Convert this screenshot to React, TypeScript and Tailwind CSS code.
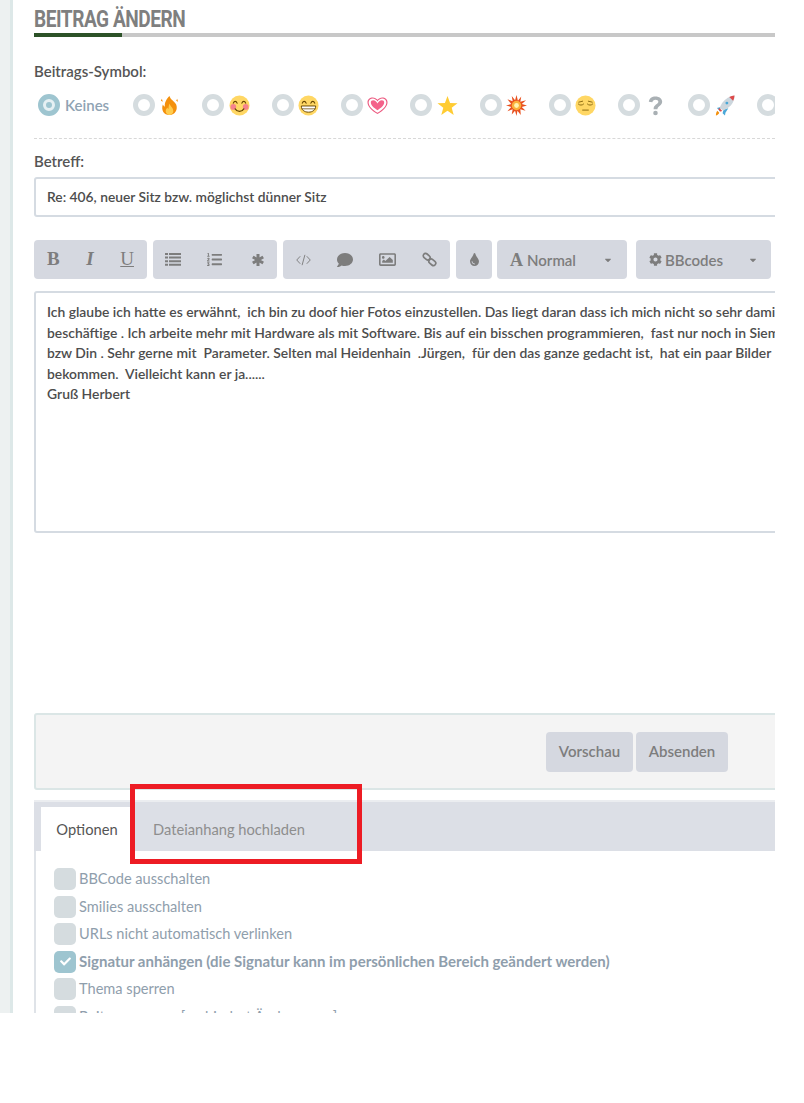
import { FaCaretDown, FaCheck, FaCog, FaComment, FaListOl, FaRegImage, FaTint } from "react-icons/fa";

const font = "font-['Lato','Noto_Sans',sans-serif]";

const postLines = [
  "Ich glaube ich hatte es erwähnt,  ich bin zu doof hier Fotos einzustellen. Das liegt daran dass ich mich nicht so sehr damit",
  "beschäftige . Ich arbeite mehr mit Hardware als mit Software. Bis auf ein bisschen programmieren,  fast nur noch in Siemens",
  "bzw Din . Sehr gerne mit  Parameter. Selten mal Heidenhain  .Jürgen,  für den das ganze gedacht ist,  hat ein paar Bilder",
  "bekommen.  Vielleicht kann er ja......",
  "Gruß Herbert",
];

const options = [
  { label: "BBCode ausschalten" },
  { label: "Smilies ausschalten" },
  { label: "URLs nicht automatisch verlinken" },
  { label: "Signatur anhängen (die Signatur kann im persönlichen Bereich geändert werden)", checked: true },
  { label: "Thema sperren" },
  { label: "Beitrag sperren [verhindert Änderungen]" },
];

const Fire = () => (
  <svg viewBox="0 0 22 22" className="w-[21px] h-[21px] shrink-0">
    <path d="M11 1c1 4 5 5 7 9 2 5-1 11-7 11S2 16 4 10c.6 1 1.200 2 2.200 2.200C5.500 8 8 4 11 1z" fill="#f4900c" />
    <path d="M11 9c.5 3 4 4 4 8 0 2-2 4-4 4s-4-2-4-4c0-2 1-3 2-4 0 1 .5 1.500 1 1.500C10 12 10.500 10.500 11 9z" fill="#ffcc4d" />
    <path d="M3 4l1 3-2-1zM19 4l1 3-2-1z" fill="#f4900c" />
  </svg>
);

const Smile = () => (
  <svg viewBox="0 0 22 22" className="w-[21px] h-[21px] shrink-0">
    <circle cx="11" cy="11" r="10.500" fill="#ffd764" />
    <circle cx="4.500" cy="12.500" r="3" fill="#f6828c" />
    <circle cx="17.500" cy="12.500" r="3" fill="#f6828c" />
    <path d="M4.500 8.500c1-2.500 3-2.500 4 0M13.500 8.500c1-2.500 3-2.500 4 0M6.500 14.500c2 3.500 7 3.500 9 0" fill="none" stroke="#664500" strokeWidth="1.200" strokeLinecap="round" />
  </svg>
);

const Grin = () => (
  <svg viewBox="0 0 22 22" className="w-[21px] h-[21px] shrink-0">
    <circle cx="11" cy="11" r="10.500" fill="#ffd764" />
    <path d="M4.500 8.500c1-2.500 3-2.500 4 0M13.500 8.500c1-2.500 3-2.500 4 0" fill="none" stroke="#664500" strokeWidth="1.200" strokeLinecap="round" />
    <path d="M3.500 11.500h15c0 4-3 6.500-7.500 6.500s-7.500-2.500-7.500-6.500z" fill="#fff" stroke="#664500" strokeWidth="1" />
    <path d="M3.800 14.500h14.400" stroke="#664500" strokeWidth=".8" />
  </svg>
);

const Heart = () => (
  <svg viewBox="0 0 22 22" className="w-[21px] h-[21px] shrink-0">
    <path d="M11 20C5 16 .5 12.500.5 7.500.5 4.500 3 2.500 6 2.500c2 0 4 1 5 2.500 1-1.500 3-2.500 5-2.500 3 0 5.500 2 5.500 5C21.500 12.500 17 16 11 20z" fill="#ec5a80" />
    <path d="M11 18.500C6 15.500 1.700 12 1.700 7.500 1.700 5.300 4 3.700 6 3.700c2 0 4 1.500 5 3 1-1.500 3-3 5-3 2 0 4.300 1.600 4.300 3.800C20.300 12 16 15.500 11 18.500z" fill="#fff" />
    <path d="M11 16c-4-2.500-7-5-7-8.300C4 6.500 5 5.500 6.500 5.500 8.500 5.500 10 7 11 9c1-2 2.500-3.500 4.500-3.500C17 5.500 18 6.500 18 7.700 18 11 15 13.500 11 16z" fill="#f4628a" />
  </svg>
);

const Star = () => (
  <svg viewBox="0 0 22 22" className="w-[21px] h-[21px] shrink-0">
    <path d="M11 1l2.700 7.300 7.800.3-6.100 4.800 2.100 7.600L11 16.600 4.500 21l2.100-7.600L.5 8.600l7.800-.3z" fill="#ffcc33" />
  </svg>
);

const Boom = () => (
  <svg viewBox="0 0 22 22" className="w-[21px] h-[21px] shrink-0">
    <path d="M11 0l1.500 6L16 1.500 15 7l6-1.500-4.500 4L22 11l-5.500 1.500 4 4-5.500-1.500.5 6-3.500-4.500L11 22l-1.500-5.500L6 20.500 7 15l-5.500 2 4-4.500L0 11l5.500-1.500-4-5L7 6.500 6 1l3.500 4.500z" fill="#e8501e" />
    <circle cx="11" cy="11" r="5" fill="#fbb03b" />
    <circle cx="11" cy="11" r="2.500" fill="#fff3b0" />
  </svg>
);

const Pensive = () => (
  <svg viewBox="0 0 22 22" className="w-[21px] h-[21px] shrink-0">
    <circle cx="11" cy="11" r="10.500" fill="#ffd764" />
    <path d="M3.500 9.500c1.500 1.500 4 1.500 5.500 0M13 9.500c1.500 1.500 4 1.500 5.500 0M4 7.500l4-1M18 7.500l-4-1M8 15.800h6" fill="none" stroke="#8a6a10" strokeWidth="1" strokeLinecap="round" />
  </svg>
);

const Question = () => (
  <svg viewBox="0 0 22 22" className="w-[21px] h-[21px] shrink-0">
    <path d="M4 7c.5-3.500 3.200-5.500 7-5.500 4 0 7 2.300 7 5.500 0 4-4.800 4.300-5 8H9c0-5 5-5.200 5-7.800 0-1.300-1.300-2.200-3-2.200-1.800 0-3 1-3.300 2.700z" fill="#a9b0b4" />
    <circle cx="11" cy="18.800" r="2.400" fill="#a9b0b4" />
  </svg>
);

const Rocket = () => (
  <svg viewBox="0 0 22 22" className="w-[21px] h-[21px] shrink-0">
    <path d="M3 13.500l4-1-1 5-1-2zM9 19l1-4 5-1-3 4.500-.5 3z" fill="#4aa8d8" />
    <path d="M21.500.500c-5 .5-9.500 3-13 8l-2.500 4.500 3.500 3.500 4.500-2.500c5-3.500 7.500-8 7.500-13.500z" fill="#ccd6dd" />
    <path d="M21.500.500c-2 .2-3.800.7-5.500 1.500l4 4c.9-1.800 1.400-3.600 1.500-5.500z" fill="#dd4a4a" />
    <circle cx="13.500" cy="8.500" r="1.500" fill="#4aa8d8" />
    <path d="M3.500 16.500l2 2c-.5 1.500-2 2.500-3.500 3 0-2 .5-4 1.500-5z" fill="#f4900c" />
    <path d="M5.500 13.500l3 3-1.500 1-2.500-2.500z" fill="#dd4a4a" />
  </svg>
);

const symbols = [Fire, Smile, Grin, Heart, Star, Boom, Pensive, Question, Rocket];

const Radio = ({ active = false }: { active?: boolean }) => (
  <span className={`flex items-center justify-center w-[22px] h-[22px] shrink-0 rounded-full border-[5px] ${active ? "border-[#9ec5d0] bg-[#e6f0f3]" : "border-[#d5dcdf] bg-white"}`}>
    {active && <span className="w-[6px] h-[6px] rounded-full bg-[#9ec5d0]" />}
  </span>
);

const ToolGroup = ({ className, children }: { className: string; children: React.ReactNode }) => (
  <div className={`flex items-center h-[39px] rounded-[4px] bg-[#d5d8e0] text-[#7d7d7d] ${className}`}>{children}</div>
);

export default function App() {
  return (
    <div className={`min-h-[1103px] bg-white ${font}`}>
      <div className="relative flex w-[775px] h-[1013px] overflow-hidden">
        <div className="w-[13px] shrink-0 bg-[#edf1f1] border-r-[3px] border-[#dde8e8]" />

        <div className="w-[800px] shrink-0 ml-[21px]">
          <div className="h-[33px] pt-[6px] font-['Roboto',sans-serif] font-bold text-[23px] leading-[28px] text-[#7f7f7f] uppercase scale-x-[0.83] origin-left tracking-tight whitespace-nowrap">
            Beitrag ändern
          </div>
          <div className="h-[4px] w-[741px] bg-[#c8c8c8]">
            <div className="h-full w-[88px] bg-[#2d5228]" />
          </div>

          <div className="mt-[24px] text-[15px] leading-[20px] font-semibold text-[#555]">Beitrags-Symbol:</div>
          <div className="flex items-center gap-[24px] mt-[13px] pl-[4px] h-[22px]">
            <div className="flex items-center gap-[5px]">
              <Radio active />
              <span className="text-[15px] font-semibold text-[#8fa3b3]">Keines</span>
            </div>
            <div className="flex items-center gap-[22px]">
              {symbols.map((Icon, i) => (
                <div key={i} className="flex items-center gap-[4.300px] w-[47.300px]">
                  <Radio />
                  <Icon />
                </div>
              ))}
              <Radio />
            </div>
          </div>

          <div className="mt-[22px] w-[741px] border-t border-dashed border-[#d8d8d8]" />

          <div className="mt-[12px] text-[15px] leading-[20px] font-semibold text-[#555]">Betreff:</div>
          <div className="mt-[6px] flex items-center h-[40px] px-[11px] rounded-[3px] border-2 border-[#d5dbe2] text-[13.800px] font-semibold text-[#4d4d4d]">
            Re: 406, neuer Sitz bzw. möglichst dünner Sitz
          </div>

          <div className="flex mt-[23px] text-[15px]">
            <ToolGroup className="w-[113px] justify-between px-[13px] font-['Liberation_Serif',serif] text-[19px] mr-[6px]">
              <span className="font-bold">B</span>
              <span className="italic font-bold">I</span>
              <span className="underline">U</span>
            </ToolGroup>
            <ToolGroup className="w-[124px] justify-between pl-[12px] pr-[12px] mr-[6px]">
              <svg viewBox="0 0 16 13" className="w-[16px] h-[13px]" fill="currentColor">
                <path d="M0 0h3v2H0zM4 0h12v2H4zM0 3.600h3v2H0zM4 3.600h12v2H4zM0 7.200h3v2H0zM4 7.200h12v2H4zM0 10.800h3v2H0zM4 10.800h12v2H4z" />
              </svg>
              <FaListOl size={15} className="-ml-[3px]" />
              <svg viewBox="0 0 14 14" className="w-[14px] h-[14px]" fill="none" stroke="currentColor" strokeWidth="3">
                <path d="M7 1v12M1.800 4l10.400 6M12.200 4L1.800 10" />
              </svg>
            </ToolGroup>
            <ToolGroup className="w-[167px] justify-between px-[13px] mr-[6px]">
              <svg viewBox="0 0 16 12" className="w-[15px] h-[12px]" fill="none" stroke="currentColor" strokeWidth="1">
                <path d="M4.500 2L.800 6l3.700 4M11.500 2l3.700 4-3.700 4M9.500 .5L6.500 11.500" />
              </svg>
              <FaComment size={16} />
              <FaRegImage size={17} />
              <svg viewBox="0 0 16 16" className="w-[15px] h-[15px]" fill="none" stroke="currentColor" strokeWidth="1.800">
                <rect x="1" y="2.500" width="8" height="5" rx="2.500" transform="rotate(40 5 5)" />
                <rect x="7" y="8.500" width="8" height="5" rx="2.500" transform="rotate(40 11 11)" />
              </svg>
            </ToolGroup>
            <ToolGroup className="w-[36px] justify-center mr-[5px]">
              <FaTint size={13} />
            </ToolGroup>
            <ToolGroup className="w-[130px] pl-[13px] pr-[14px] justify-between font-semibold mr-[9px]">
              <span className="flex items-center gap-[4px]">
                <span className="font-['Liberation_Serif',serif] font-bold text-[18px] leading-none">A</span>
                <span className="pt-[1px]">Normal</span>
              </span>
              <FaCaretDown size={10} />
            </ToolGroup>
            <ToolGroup className="w-[135px] pl-[13px] pr-[13px] justify-between font-semibold">
              <span className="flex items-center gap-[3px]">
                <FaCog size={13} />
                <span className="pt-[1px]">BBcodes</span>
              </span>
              <FaCaretDown size={10} />
            </ToolGroup>
          </div>

          <div className="mt-[12px] h-[242px] px-[11px] py-[9px] rounded-[3px] border-2 border-[#d5dbe2] text-[13.900px] leading-[20.500px] font-semibold text-[#4d4d4d] whitespace-pre">
            {postLines.map((line, i) => (
              <div key={i}>{line}</div>
            ))}
          </div>

          <div className="mt-[180px] flex items-center h-[77px] pl-[510px] gap-[3px] rounded-[3px] border-2 border-[#dbe6e6] bg-[#f4f4f4] text-[15px] font-semibold text-[#7d7d7d]">
            <div className="flex items-center justify-center w-[87px] h-[40px] rounded-[4px] bg-[#d5d8e0]">Vorschau</div>
            <div className="flex items-center justify-center w-[92px] h-[40px] rounded-[4px] bg-[#d5d8e0]">Absenden</div>
          </div>

          <div className="mt-[10px] border-l-2 border-[#dfe3e8]">
            <div className="flex items-end h-[51px] -ml-[2px] pl-[7px] gap-[20px] bg-[#dcdfe6] border-t-2 border-[#ebedf0] text-[14.700px]">
              <div className="flex items-center justify-center w-[92px] h-[44px] bg-white text-[#555]">Optionen</div>
              <div className="flex items-center h-[44px] text-[#8e8e8e]">Dateianhang hochladen</div>
            </div>
            <div className="flex flex-col gap-[5.500px] pl-[18px] pt-[17px] text-[14.600px] text-[#8f9eac]">
              {options.map((option) => (
                <div key={option.label} className="flex items-center gap-[3px] h-[22px] whitespace-nowrap">
                  <span className={`flex items-center justify-center w-[22px] h-[22px] rounded-[5px] text-white ${option.checked ? "bg-[#9ec5d0]" : "bg-[#d5dcdf]"}`}>
                    {option.checked && <FaCheck size={11} />}
                  </span>
                  <span className={option.checked ? "font-bold text-[15px]" : ""}>{option.label}</span>
                </div>
              ))}
            </div>
          </div>
        </div>

        <div className="absolute left-[130px] top-[784px] w-[232px] h-[80px] border-[5px] border-[#ed1c24]" />
      </div>
    </div>
  );
}
